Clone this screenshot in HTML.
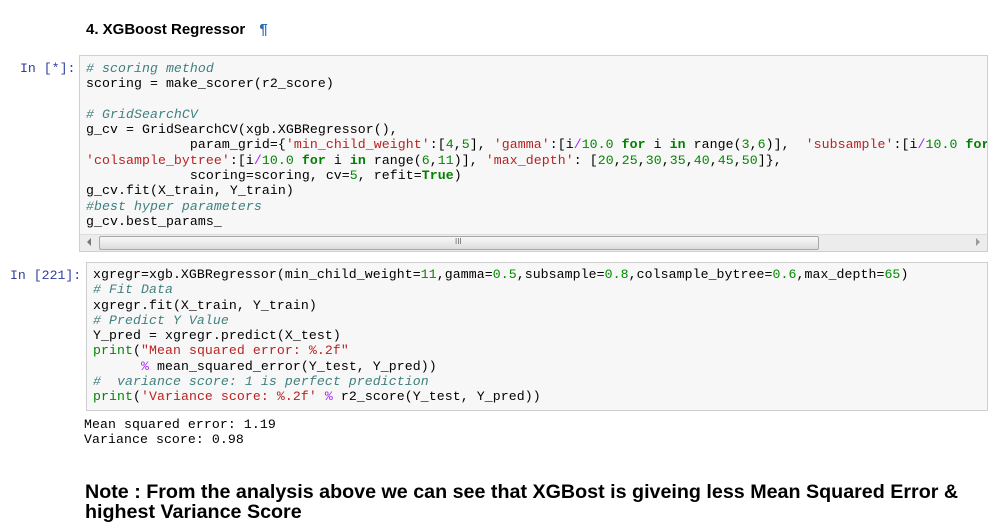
<!DOCTYPE html>
<html><head><meta charset="utf-8"><style>
body{margin:0;width:1006px;height:526px;background:#fff;position:relative;overflow:hidden;font-family:"Liberation Sans",sans-serif}
.p{position:absolute}
pre{margin:0;font-family:"Liberation Mono",monospace;font-size:13.2px;line-height:15.3px;color:#000;white-space:pre;letter-spacing:0.08px}
.prompt{font-family:"Liberation Mono",monospace;font-size:13.2px;color:#303f9f;position:absolute}
.c{color:#408080;font-style:italic}
.s{color:#ba2121}
.k{color:#008000;font-weight:bold}
.n{color:#080}
.o{color:#aa22ff}
.box{position:absolute;background:#f7f7f7;border:1px solid #cfcfcf}
</style></head><body>
<div class="p" style="left:86px;top:21px;font-weight:bold;font-size:15px;">4. XGBoost Regressor <span style="color:#2a6eb8;margin-left:10px">¶</span></div>

<div class="prompt" style="left:20px;top:61px">In [*]:</div>
<div class="box" style="left:79px;top:55px;width:907px;height:195px;overflow:hidden">
<pre style="position:absolute;left:6px;top:5px"><span class="c"># scoring method</span>
scoring = make_scorer(r2_score)

<span class="c"># GridSearchCV</span>
g_cv = GridSearchCV(xgb.XGBRegressor(),
             param_grid={<span class="s">'min_child_weight'</span>:[<span class="n">4</span>,<span class="n">5</span>], <span class="s">'gamma'</span>:[i<span class="o">/</span><span class="n">10.0</span> <span class="k">for</span> i <span class="k">in</span> range(<span class="n">3</span>,<span class="n">6</span>)],  <span class="s">'subsample'</span>:[i<span class="o">/</span><span class="n">10.0</span> <span class="k">for</span> i <span class="k">in</span> range(<span class="n">6</span>,<span class="n">11</span>)],
<span class="s">'colsample_bytree'</span>:[i<span class="o">/</span><span class="n">10.0</span> <span class="k">for</span> i <span class="k">in</span> range(<span class="n">6</span>,<span class="n">11</span>)], <span class="s">'max_depth'</span>: [<span class="n">20</span>,<span class="n">25</span>,<span class="n">30</span>,<span class="n">35</span>,<span class="n">40</span>,<span class="n">45</span>,<span class="n">50</span>]},
             scoring=scoring, cv=<span class="n">5</span>, refit=<span class="k">True</span>)
g_cv.fit(X_train, Y_train)
<span class="c">#best hyper parameters</span>
g_cv.best_params_</pre>
<div style="position:absolute;left:0;top:178px;width:907px;height:17px;background:#ececec;border-top:1px solid #ddd"></div>
<div style="position:absolute;left:19px;top:180px;width:718px;height:12px;background:linear-gradient(#f8f8f8,#dcdcdc);border:1px solid #a8a8a8;border-radius:2px"></div>
<div style="position:absolute;left:375px;top:181px;font-size:8px;color:#666">III</div>
<div style="position:absolute;left:7px;top:182px;width:0;height:0;border:4px solid transparent;border-right-color:#777;border-left:0"></div>
<div style="position:absolute;left:896px;top:182px;width:0;height:0;border:4px solid transparent;border-left-color:#999;border-right:0"></div>
</div>

<div class="prompt" style="left:10px;top:268px">In [221]:</div>
<div class="box" style="left:86px;top:262px;width:900px;height:147px">
<pre style="position:absolute;left:6px;top:4px">xgregr=xgb.XGBRegressor(min_child_weight=<span class="n">11</span>,gamma=<span class="n">0.5</span>,subsample=<span class="n">0.8</span>,colsample_bytree=<span class="n">0.6</span>,max_depth=<span class="n">65</span>)
<span class="c"># Fit Data</span>
xgregr.fit(X_train, Y_train)
<span class="c"># Predict Y Value</span>
Y_pred = xgregr.predict(X_test)
<span class="n">print</span>(<span class="s">"Mean squared error: %.2f"</span>
      <span class="o">%</span> mean_squared_error(Y_test, Y_pred))
<span class="c">#  variance score: 1 is perfect prediction</span>
<span class="n">print</span>(<span class="s">'Variance score: %.2f'</span> <span class="o">%</span> r2_score(Y_test, Y_pred))</pre>
</div>
<pre class="p" style="left:84px;top:417px">Mean squared error: 1.19
Variance score: 0.98</pre>

<div class="p" style="left:85px;top:483px;font-weight:bold;font-size:19.7px;line-height:19.5px;width:900px">Note : From the analysis above we can see that XGBost is giveing less Mean Squared Error &amp; highest Variance Score</div>
</body></html>
